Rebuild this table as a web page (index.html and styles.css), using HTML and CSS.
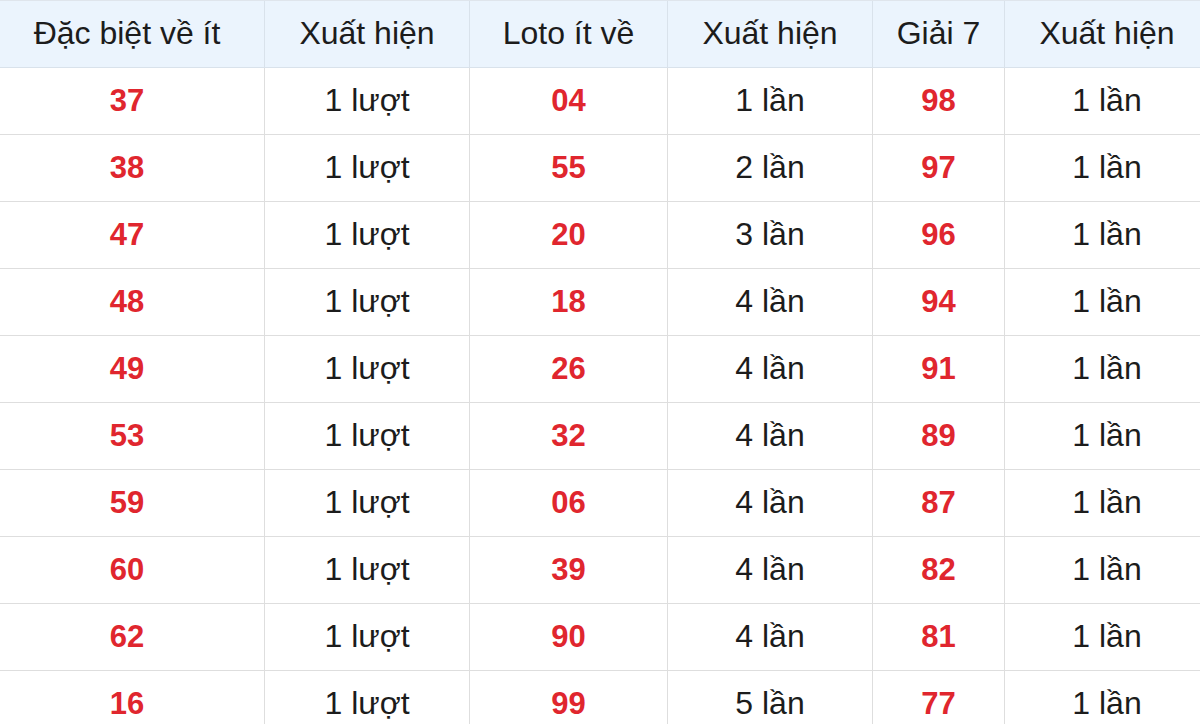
FILE: index.html
```html
<!DOCTYPE html>
<html lang="vi">
<head>
<meta charset="utf-8">
<title>Thống kê</title>
<link rel="stylesheet" href="styles.css">
</head>
<body>
<div class="wrap">
<table class="stats">
  <colgroup>
    <col class="c1"><col class="c2"><col class="c3"><col class="c4"><col class="c5"><col class="c6">
  </colgroup>
  <thead>
    <tr><th>Đặc biệt về ít</th><th>Xuất hiện</th><th>Loto ít về</th><th>Xuất hiện</th><th>Giải 7</th><th>Xuất hiện</th></tr>
  </thead>
  <tbody>
    <tr><td class="num">37</td><td>1 lượt</td><td class="num">04</td><td>1 lần</td><td class="num">98</td><td>1 lần</td></tr>
    <tr><td class="num">38</td><td>1 lượt</td><td class="num">55</td><td>2 lần</td><td class="num">97</td><td>1 lần</td></tr>
    <tr><td class="num">47</td><td>1 lượt</td><td class="num">20</td><td>3 lần</td><td class="num">96</td><td>1 lần</td></tr>
    <tr><td class="num">48</td><td>1 lượt</td><td class="num">18</td><td>4 lần</td><td class="num">94</td><td>1 lần</td></tr>
    <tr><td class="num">49</td><td>1 lượt</td><td class="num">26</td><td>4 lần</td><td class="num">91</td><td>1 lần</td></tr>
    <tr><td class="num">53</td><td>1 lượt</td><td class="num">32</td><td>4 lần</td><td class="num">89</td><td>1 lần</td></tr>
    <tr><td class="num">59</td><td>1 lượt</td><td class="num">06</td><td>4 lần</td><td class="num">87</td><td>1 lần</td></tr>
    <tr><td class="num">60</td><td>1 lượt</td><td class="num">39</td><td>4 lần</td><td class="num">82</td><td>1 lần</td></tr>
    <tr><td class="num">62</td><td>1 lượt</td><td class="num">90</td><td>4 lần</td><td class="num">81</td><td>1 lần</td></tr>
    <tr><td class="num">16</td><td>1 lượt</td><td class="num">99</td><td>5 lần</td><td class="num">77</td><td>1 lần</td></tr>
  </tbody>
</table>
</div>
</body>
</html>
```
FILE: styles.css
```css
html, body {
  margin: 0;
  padding: 0;
  background: #ffffff;
  overflow: hidden;
}

.wrap {
  width: 1200px;
  overflow: hidden;
}

.stats {
  margin-left: -10px;
  width: 1220px;
  table-layout: fixed;
  border-collapse: separate;
  border-spacing: 0;
  border-top: 1px solid #dfe5ec;
  font-family: "Liberation Sans", Arial, sans-serif;
  font-size: 32px;
  color: #1c1c1c;
}

.c1 { width: 275px; }
.c2 { width: 205px; }
.c3 { width: 198px; }
.c4 { width: 205px; }
.c5 { width: 132px; }
.c6 { width: 205px; }

.stats th,
.stats td {
  height: 64px;
  padding: 0 0 2px;
  line-height: 1;
  text-align: center;
  vertical-align: middle;
  border-bottom: 1px solid #dedede;
  border-right: 1px solid #dedede;
  box-sizing: content-box;
}

.stats th {
  font-weight: normal;
  background: #ebf4fd;
  border-bottom-color: #d9e2eb;
  border-right-color: #d9e2eb;
}

.stats .num {
  color: #e0262e;
  font-weight: bold;
  font-size: 31px;
}
```
